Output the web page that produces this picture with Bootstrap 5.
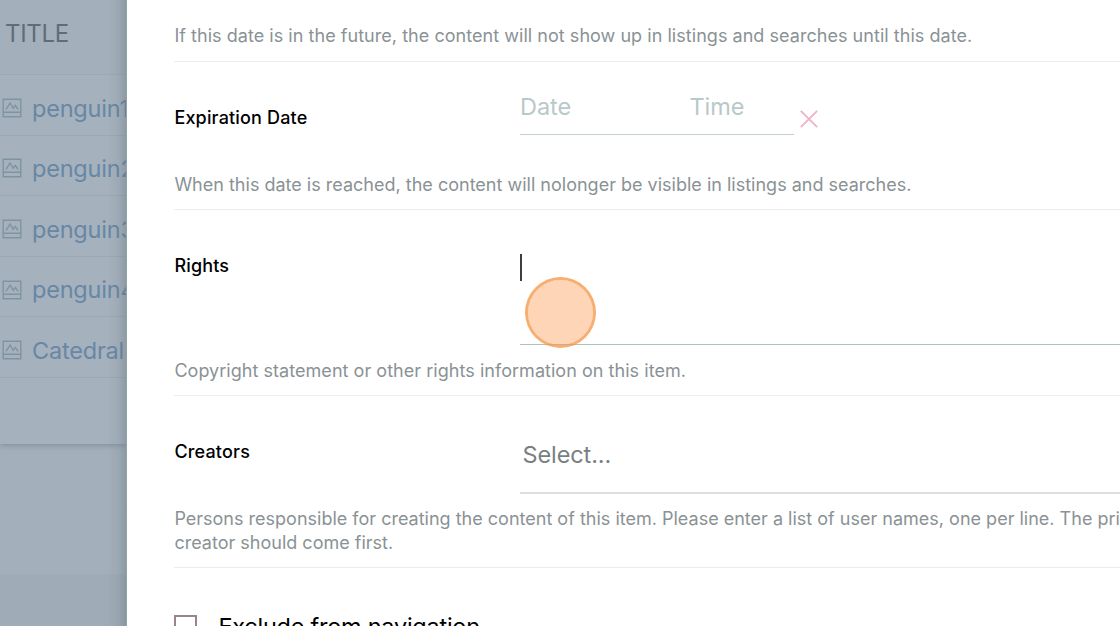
<!DOCTYPE html>
<html lang="en">
<head>
<meta charset="utf-8">
<meta name="viewport" content="width=device-width, initial-scale=1">
<title>Edit properties</title>
<link href="https://cdn.jsdelivr.net/npm/bootstrap@5.3.0/dist/css/bootstrap.min.css" rel="stylesheet">
<style>
body { font-family: Inter, "Liberation Sans", sans-serif; font-weight: 400; color: #000; }
.app { height: 626px; }
.contents { width: 126.7px; flex: none; background: #a3b0bc; position: relative; }
.contents::after { content: ""; position: absolute; inset: 0 0 0 auto; width: 20px; background: linear-gradient(90deg, rgba(90,108,118,0), rgba(90,108,118,.1) 60%, rgba(90,108,118,.32)); border-right: 1px solid #91a3a8; }
.listing { height: 444px; background: #a5b1bd; box-shadow: 0 1px 6px rgba(85,103,118,.5); }
.listing-head { height: 75px; padding: 16px 0 0 5px; background: #a3afbb; border-bottom: 1px solid #9ba9b5; font-size: 24px; line-height: 36px; letter-spacing: -.3px; color: #5e6d79; }
.listing-item { height: 60.6px; padding: 7px 0 0 2px; gap: 10px; border-bottom: 1px solid #9ba9b5; font-size: 23.5px; letter-spacing: -.2px; color: #6887a4; white-space: nowrap; }
.listing-item svg { flex: none; margin-top: -1px; }
.page-bottom { height: 52px; background: #9fabb7; }
.editor { min-width: 0; background: #fff; padding-left: 47.7px; }
.field { border-bottom: 1px solid #eaeeef; }
.field-label { width: 345.6px; flex: none; font-size: 18px; font-weight: 500; line-height: 24px; letter-spacing: .17px; }
.help { font-size: 18px; line-height: 23.5px; letter-spacing: .04px; color: #8a9295; white-space: nowrap; }
.f1 { height: 62px; padding-bottom: 14px; }
.f2 { height: 148px; padding-bottom: 13px; }
.f3 { height: 186px; padding-bottom: 13px; }
.f4 { height: 172px; padding-bottom: 13px; }
.f2 .help, .f4 .help { letter-spacing: .005px; }
.f2 .field-label, .f3 .field-label, .f4 .field-label { padding-top: 44px; }
.dates { width: 274px; height: 73px; padding-top: 27px; border-bottom: 1px solid #c3d0d1; font-size: 23.5px; line-height: 36px; letter-spacing: -.05px; color: #b9c8c9; }
.date-part { width: 169.5px; }
.clear { margin: 47.5px 0 0 6.5px; }
.rights { height: 135px; padding-top: 44px; border-bottom: 1px solid #a9c2c5; position: relative; }
.caret { width: 2px; height: 27px; background: #3b3f43; }
.click-mark { position: absolute; left: 5px; top: 67px; width: 71px; height: 71px; border: 3px solid rgba(245,151,72,.78); background: rgba(255,150,75,.4); background-clip: padding-box; z-index: 2; }
.chooser { height: 98px; padding: 40px 0 0 2.5px; border-bottom: 2px solid #dce0e3; font-size: 23.5px; line-height: 37px; letter-spacing: -.1px; color: #7a7f81; }
.nav-check { padding-top: 47px; gap: 21px; }
.tick { width: 23px; height: 23px; border: 2px solid #998589; }
.tick-label { font-size: 23.5px; line-height: 36px; letter-spacing: -.25px; margin-top: -6px; }
</style>
</head>
<body class="overflow-hidden">
<svg class="d-none" xmlns="http://www.w3.org/2000/svg">
  <symbol id="image" viewBox="0 0 20 20"><path d="M1.2 1.2h17.6v17.6H1.2zM1.2 14.2h17.6M4 11.3 8.1 5l3.1 5.2 2.2-2.7 2.6 3.8" fill="none" stroke="#8093a0" stroke-width="1.4"/></symbol>
</svg>
<div class="app d-flex overflow-hidden">
  <aside class="contents d-flex flex-column overflow-hidden">
    <div class="listing">
      <div class="listing-head">TITLE</div>
      <div class="listing-item d-flex align-items-center"><svg width="20" height="20"><use href="#image"/></svg><span>penguin1</span></div>
      <div class="listing-item d-flex align-items-center"><svg width="20" height="20"><use href="#image"/></svg><span>penguin2</span></div>
      <div class="listing-item d-flex align-items-center"><svg width="20" height="20"><use href="#image"/></svg><span>penguin3</span></div>
      <div class="listing-item d-flex align-items-center"><svg width="20" height="20"><use href="#image"/></svg><span>penguin4</span></div>
      <div class="listing-item d-flex align-items-center"><svg width="20" height="20"><use href="#image"/></svg><span>Catedral</span></div>
    </div>
    <div class="page-bottom mt-auto"></div>
  </aside>
  <main class="editor flex-grow-1">
    <section class="field f1 d-flex flex-column justify-content-end">
      <div class="help">If this date is in the future, the content will not show up in listings and searches until this date.</div>
    </section>
    <section class="field f2 d-flex flex-column justify-content-between">
      <div class="d-flex align-items-start">
        <div class="field-label">Expiration Date</div>
        <div class="dates d-flex"><span class="date-part">Date</span><span>Time</span></div>
        <svg class="clear" width="18" height="18" viewBox="0 0 18 18"><path d="M.8.8l16.4 16.4M17.2.8.8 17.2" stroke="#ecb4c6" stroke-width="1.9"/></svg>
      </div>
      <div class="help">When this date is reached, the content will nolonger be visible in listings and searches.</div>
    </section>
    <section class="field f3 d-flex flex-column justify-content-between">
      <div class="d-flex align-items-start">
        <div class="field-label">Rights</div>
        <div class="rights flex-grow-1"><div class="caret"></div><div class="click-mark rounded-circle"></div></div>
      </div>
      <div class="help">Copyright statement or other rights information on this item.</div>
    </section>
    <section class="field f4 d-flex flex-column justify-content-between">
      <div class="d-flex align-items-start">
        <div class="field-label">Creators</div>
        <div class="chooser flex-grow-1">Select...</div>
      </div>
      <div class="help">Persons responsible for creating the content of this item. Please enter a list of user names, one per line. The principal<br>creator should come first.</div>
    </section>
    <div class="nav-check d-flex align-items-start">
      <span class="tick"></span><span class="tick-label">Exclude from navigation</span>
    </div>
  </main>
</div>
<script src="https://cdn.jsdelivr.net/npm/bootstrap@5.3.0/dist/js/bootstrap.bundle.min.js"></script>
</body>
</html>
